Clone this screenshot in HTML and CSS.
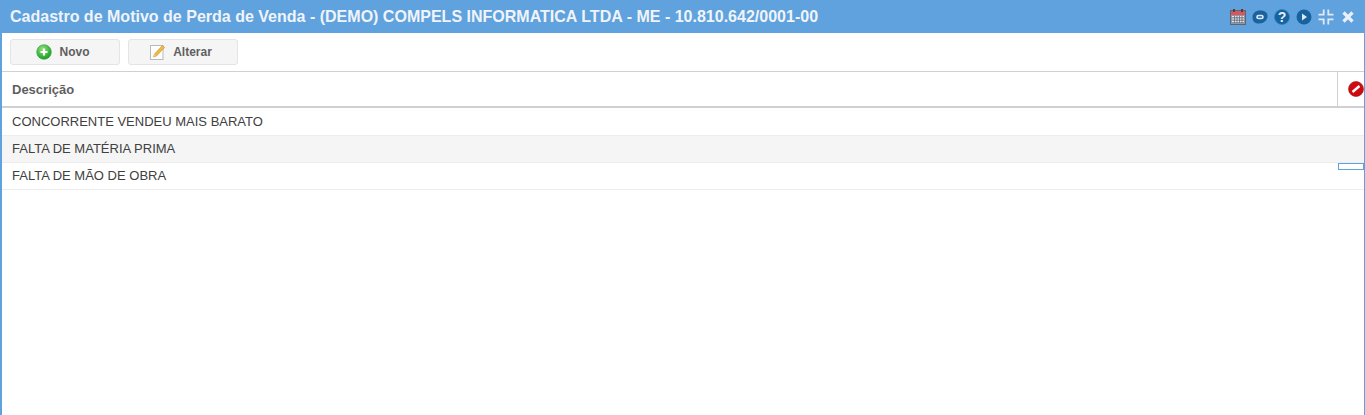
FILE: index.html
```html
<!DOCTYPE html>
<html lang="pt-BR">
<head>
<meta charset="utf-8">
<title>Cadastro de Motivo de Perda de Venda</title>
<link rel="stylesheet" href="styles.css">
</head>
<body>
<section class="janela">
  <header class="titulo">
    <div class="titulo-txt">Cadastro de Motivo de Perda de Venda - (DEMO) COMPELS INFORMATICA LTDA - ME - 10.810.642/0001-00</div>
    <div class="titulo-icones">
      <svg width="16" height="16" viewBox="0 0 16 16"><rect x="0.5" y="1.5" width="15" height="14" fill="#8e97a3" stroke="#5d6670"/><rect x="1" y="2" width="14" height="4" fill="#d9555f"/><rect x="3" y="0" width="2" height="3" fill="#444"/><rect x="11" y="0" width="2" height="3" fill="#444"/><path d="M2 7.5h12M2 10h12M2 12.5h12" stroke="#e4e8ee" stroke-width="1.2"/><path d="M4.5 7v7M7 7v7M9.500 7v7M12 7v7" stroke="#59626e" stroke-width="0.7"/></svg>
      <svg width="16" height="16" viewBox="0 0 16 16"><path d="M8 1.500c4 0 7.500 1.500 7.500 5.500S12 14.500 7 14.500 .5 12 .5 8 4 1.500 8 1.500z" fill="#17629f"/><rect x="4.200" y="5.700" width="7.600" height="4.600" rx="2.300" fill="#dfe9f2"/><rect x="6" y="7.300" width="4" height="1.400" fill="#17629f"/></svg>
      <svg width="16" height="16" viewBox="0 0 16 16"><circle cx="8" cy="8" r="7.500" fill="#17629f" stroke="#2b86c5" stroke-width="0.8"/><text x="8" y="13" class="ico-ajuda" text-anchor="middle">?</text></svg>
      <svg width="16" height="16" viewBox="0 0 16 16"><circle cx="8" cy="8" r="7.500" fill="#17629f"/><path d="M6 4.500l5 3.500-5 3.500z" fill="#dfe9f2"/></svg>
      <svg width="16" height="16" viewBox="0 0 16 16" fill="#e4e9f6"><path d="M4.800 .5h1.800v6.100H.5V4.800h4.300zM9.400 .5h1.800v4.300h4.300v1.800H9.400zM.5 9.400h6.100v6.100H4.800v-4.300H.5zM9.400 9.400h6.100v1.800h-4.300v4.300H9.400z"/></svg>
      <svg class="ico-fechar" width="14" height="14" viewBox="0 0 14 14"><path d="M2.500 2.500l9 9M11.500 2.500l-9 9" stroke="#e9eff8" stroke-width="3.200"/></svg>
    </div>
  </header>

  <div class="barra">
    <button class="btn btn-novo">
      <svg width="16" height="16" viewBox="0 0 16 16"><defs><radialGradient id="gv" cx="40%" cy="30%" r="75%"><stop offset="0" stop-color="#8fe27d"/><stop offset="1" stop-color="#149a1c"/></radialGradient></defs><circle cx="8" cy="8" r="7.300" fill="url(#gv)" stroke="#2a9a2d" stroke-width="0.6"/><path d="M8 4.500v7M4.500 8h7" stroke="#fff" stroke-width="2.200"/></svg>
      Novo
    </button>
    <button class="btn btn-alterar">
      <svg width="16" height="16" viewBox="0 0 16 16"><rect x="1.500" y="1.500" width="12.500" height="14" fill="#fdfdfd" stroke="#b9b9b9"/><path d="M13.500 1.500l2 2-8 8.500-3 1 1-3z" fill="#f0b93f" stroke="#c98a1f" stroke-width="0.6"/><path d="M4.500 13l1-3 2 2z" fill="#e8c79a"/></svg>
      Alterar
    </button>
  </div>

  <div class="grid-cab">
    <div class="cab-desc">Descrição</div>
    <div class="cab-acao">
      <svg width="16" height="16" viewBox="0 0 16 16"><circle cx="8" cy="8" r="7.500" fill="#d10a0f" stroke="#8c1a1a" stroke-width="0.6"/><path d="M4.500 11l7-6" stroke="#fff" stroke-width="2.400"/></svg>
    </div>
  </div>
  <div class="linhas">
    <div class="linha">CONCORRENTE VENDEU MAIS BARATO</div>
    <div class="linha alt">FALTA DE MATÉRIA PRIMA</div>
    <div class="linha">FALTA DE MÃO DE OBRA</div>
  </div>
  <div class="marca"></div>
</section>
</body>
</html>
```

FILE: styles.css
```css
html, body {
	margin: 0;
	padding: 0;
	height: 100%;
	overflow: hidden;
}
body {
	font-family: "Liberation Sans", Arial, sans-serif;
	background: #fff;
}
.janela {
	position: relative;
	box-sizing: border-box;
	height: 415px;
	border-left: 2px solid #5fa2dd;
	border-right: 1px solid #5fa2dd;
	background: #fff;
}

/* titulo */
.titulo {
	display: flex;
	justify-content: space-between;
	align-items: center;
	height: 33px;
	margin: 0 -1px 0 -2px;
	padding: 0 10px;
	background: #5fa2dd;
}
.titulo-txt {
	font-size: 16.02px;
	font-weight: bold;
	color: #f0f4fa;
}
.titulo-icones {
	display: flex;
	align-items: center;
	gap: 6px;
}
.ico-fechar {
	margin-left: 1px;
}
.ico-ajuda {
	font: bold 14px "Liberation Sans", Arial, sans-serif;
	fill: #e6eef6;
}

/* botoes */
.barra {
	display: flex;
	gap: 8px;
	height: 38px;
	box-sizing: border-box;
	padding: 6px 8px 0;
}
.btn {
	display: flex;
	align-items: center;
	justify-content: center;
	gap: 8px;
	box-sizing: border-box;
	height: 26px;
	padding: 0 5px 0 0;
	border: 1px solid #e4e4e4;
	border-radius: 3px;
	background: #f5f5f5;
	font-family: inherit;
	font-size: 12px;
	font-weight: bold;
	color: #5f5f5f;
}
.btn-novo { width: 110px; }
.btn-alterar { width: 110px; }

/* grid */
.grid-cab {
	display: flex;
	box-sizing: border-box;
	height: 37px;
	border-top: 1px solid #d0d0d0;
	border-bottom: 2px solid #d0d0d0;
}
.cab-desc {
	flex: 1;
	padding-left: 10px;
	font-size: 13px;
	font-weight: bold;
	line-height: 36px;
	color: #5f5f5f;
}
.cab-acao {
	display: flex;
	align-items: center;
	justify-content: flex-end;
	box-sizing: border-box;
	width: 27px;
	border-left: 1px solid #d0d0d0;
}
.linhas {
	padding-top: 1px;
}
.linha {
	box-sizing: border-box;
	height: 27px;
	padding-left: 10px;
	border-bottom: 1px solid #ededed;
	font-size: 13px;
	line-height: 25px;
	color: #404040;
}
.linha.alt { background: #f5f5f5; }

/* caixinha sobre a grid */
.marca {
	position: absolute;
	right: 0;
	top: 163px;
	box-sizing: border-box;
	width: 26px;
	height: 7px;
	border: 1px solid #5fa2dd;
	background: #fff;
}
```
